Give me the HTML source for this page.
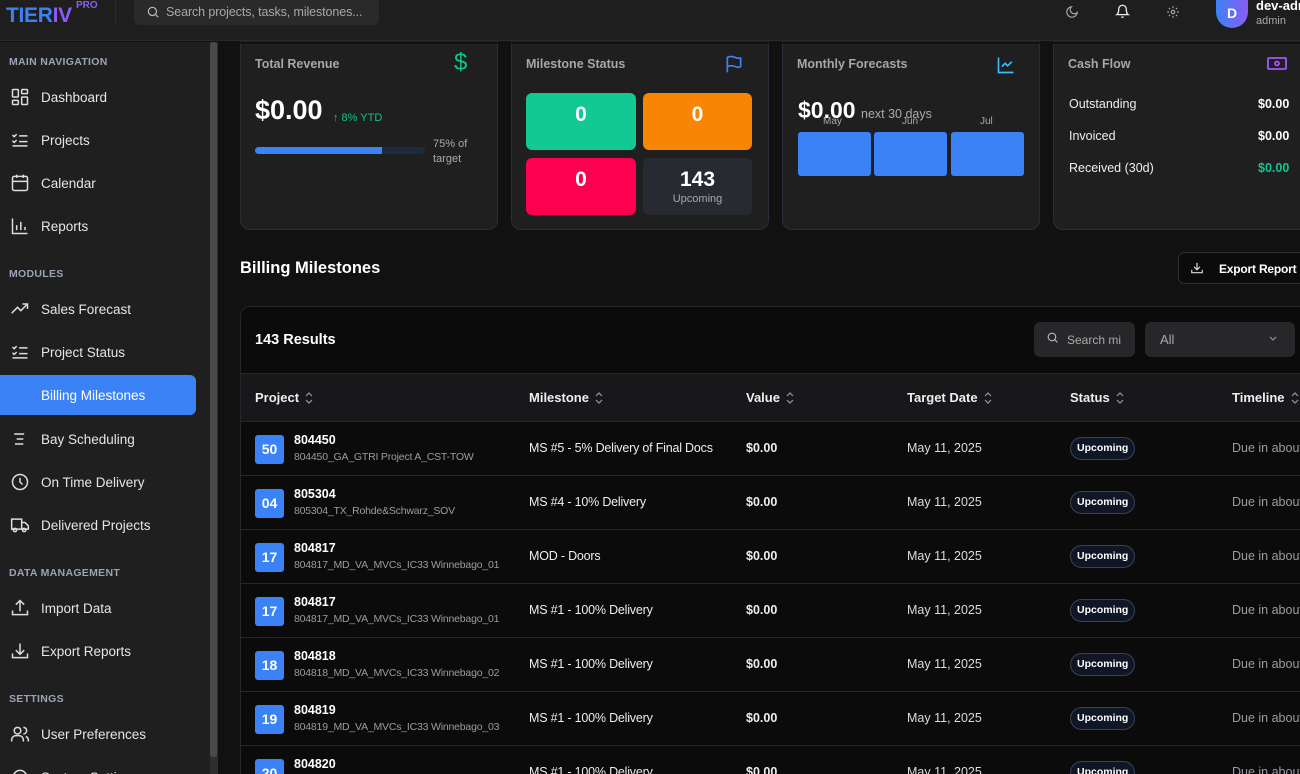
<!DOCTYPE html>
<html style="width:1300px;height:774px;overflow:hidden"><head><meta charset="utf-8"><style>
*{box-sizing:border-box;margin:0;padding:0}
body{width:1300px;height:774px;overflow:hidden;background:#111112;font-family:"Liberation Sans",sans-serif;color:#e5e7eb;position:relative;white-space:nowrap}
.abs{position:absolute}
svg{display:block}
.hdr{left:0;top:0;width:1300px;height:41px;background:#1e1e1e;border-bottom:1px solid #2a2a2a;z-index:5}
.side{left:0;top:42px;width:210px;height:732px;background:#1f1f1f;overflow:hidden}
.sec{position:absolute;left:9px;font-size:10.5px;color:#9aa4b5;letter-spacing:.3px;font-weight:bold}
.nav{position:absolute;left:0;width:196px;height:40px;display:flex;align-items:center;font-size:13.5px;color:#e6e6e6}
.nav svg{position:absolute;left:10px}
.nav span{position:absolute;left:41px}
.card{background:#1f1f1f;border:1px solid #2a2e36;border-radius:10px;top:20px;height:210px;width:258px}
.ct{position:absolute;left:14px;top:36px;font-size:12.5px;color:#a3a7ae;font-weight:bold}
.tb{left:240px;top:306px;width:1070px;height:468px;background:#0b0b0c;border:1px solid #26272b;border-bottom:none;border-radius:10px 10px 0 0;overflow:hidden}
.th{position:absolute;font-size:13px;font-weight:bold;color:#eee;top:83px;display:flex;align-items:center;gap:6px}
.row{position:absolute;left:0;width:1070px;height:54px;border-top:1px solid #26272b}
.row .b{position:absolute;left:14px;top:13px;width:29px;height:29px;background:#3b82f6;border-radius:3px;color:#fff;font-weight:bold;font-size:14px;text-align:center;line-height:29px}
.row .p{position:absolute;left:53px;top:11px;font-size:12.5px;font-weight:bold;color:#fff}
.row .s{position:absolute;left:53px;top:29px;font-size:10.5px;color:#9a9ca2;letter-spacing:-.2px}
.row .m{position:absolute;left:288px;top:19px;font-size:12.5px;color:#eee;letter-spacing:-.2px}
.row .v{position:absolute;left:505px;top:19px;font-size:12.5px;font-weight:bold;color:#eee}
.row .d{position:absolute;left:666px;top:19px;font-size:12.5px;color:#ddd}
.row .u{position:absolute;left:829px;top:15px;height:23px;padding:0 6px;border:1px solid #3a4252;background:#0f1626;border-radius:12px;font-size:10.5px;font-weight:bold;color:#fff;line-height:21px}
.row .t{position:absolute;left:991px;top:19px;font-size:12.5px;color:#9a9ca2}
</style></head><body>
<div class="abs hdr">
 <div class="abs" style="left:6px;top:4px;font-size:21px;font-weight:bold;letter-spacing:-.3px"><span style="color:#3b82f6">TIER</span><span style="color:#8b5cf6">IV</span></div>
 <div class="abs" style="left:76px;top:0px;font-size:10px;font-weight:bold;color:#8b5cf6">PRO</div>
 <div class="abs" style="left:115px;top:2px;width:1px;height:22px;background:#2c2c2c"></div>
 <div class="abs" style="left:134px;top:0;width:245px;height:25px;background:#2a2a2a;border-radius:0 0 6px 6px"></div>
 <svg class="abs" style="left:146px;top:5px" width="14" height="14" viewBox="0 0 24 24" fill="none" stroke="#bbb" stroke-width="2"><circle cx="11" cy="11" r="7"/><path d="M21 21l-5-5"/></svg>
 <div class="abs" style="left:166px;top:5px;font-size:12.5px;color:#a8a8a8;letter-spacing:-.1px">Search projects, tasks, milestones...</div>
 <svg class="abs" style="left:1065px;top:5px" width="14" height="14" viewBox="0 0 24 24" fill="none" stroke="#aaa" stroke-width="2"><path d="M21 13A9 9 0 1 1 11 3a7 7 0 0 0 10 10z"/></svg>
 <svg class="abs" style="left:1115px;top:4px" width="15" height="15" viewBox="0 0 24 24" fill="none" stroke="#eee" stroke-width="2"><path d="M6 8a6 6 0 0 1 12 0c0 7 3 9 3 9H3s3-2 3-9M10 21h4"/></svg>
 <svg class="abs" style="left:1166px;top:5px" width="14" height="14" viewBox="0 0 24 24" fill="none" stroke="#aaa" stroke-width="2"><circle cx="12" cy="12" r="3"/><path d="M12 2v3M12 19v3M2 12h3M19 12h3M5 5l2 2M17 17l2 2M5 19l2-2M17 7l2-2"/></svg>
 <div class="abs" style="left:1216px;top:0;width:32px;height:28px;border-radius:0 0 16px 16px;background:linear-gradient(90deg,#3b82f6,#8b5cf6);color:#fff;font-weight:bold;font-size:14px;text-align:center;line-height:26px">D</div>
 <div class="abs" style="left:1256px;top:-2px;font-size:13px;font-weight:bold;color:#fff">dev-admin</div>
 <div class="abs" style="left:1256px;top:15px;font-size:11px;color:#aaa">admin</div>
</div>
<div class="abs side">
 <div class="sec" style="top:14px">MAIN NAVIGATION</div>
 <div class="nav" style="top:35px"><svg width="20" height="20" viewBox="0 0 24 24" fill="none" stroke="#ddd" stroke-width="1.8"><rect x="3" y="3" width="7" height="9" rx="1"/><rect x="14" y="3" width="7" height="5" rx="1"/><rect x="14" y="12" width="7" height="9" rx="1"/><rect x="3" y="16" width="7" height="5" rx="1"/></svg><span>Dashboard</span></div>
 <div class="nav" style="top:78px"><svg width="20" height="20" viewBox="0 0 24 24" fill="none" stroke="#ddd" stroke-width="1.8"><path d="M3 6l2 2 3-3M3 13l2 2 3-3M11 7h10M11 14h10M3 19h18"/></svg><span>Projects</span></div>
 <div class="nav" style="top:121px"><svg width="20" height="20" viewBox="0 0 24 24" fill="none" stroke="#ddd" stroke-width="1.8"><rect x="3" y="4" width="18" height="17" rx="2"/><path d="M3 10h18M8 2v4M16 2v4"/></svg><span>Calendar</span></div>
 <div class="nav" style="top:164px"><svg width="20" height="20" viewBox="0 0 24 24" fill="none" stroke="#ddd" stroke-width="1.8"><path d="M3 3v18h18M8 17v-6M13 17V7M18 17v-4"/></svg><span>Reports</span></div>
 <div class="sec" style="top:226px">MODULES</div>
 <div class="nav" style="top:247px"><svg width="20" height="20" viewBox="0 0 24 24" fill="none" stroke="#ddd" stroke-width="1.8"><path d="M2 17l7-7 4 4 8-8M15 6h6v6"/></svg><span>Sales Forecast</span></div>
 <div class="nav" style="top:290px"><svg width="20" height="20" viewBox="0 0 24 24" fill="none" stroke="#ddd" stroke-width="1.8"><path d="M3 6l2 2 3-3M3 13l2 2 3-3M11 7h10M11 14h10M3 19h18"/></svg><span>Project Status</span></div>
 <div class="nav" style="top:333px;background:#3b82f6;border-radius:0 6px 6px 0"><span style="color:#fff">Billing Milestones</span></div>
 <div class="nav" style="top:377px"><svg width="20" height="20" viewBox="0 0 24 24" fill="none" stroke="#ddd" stroke-width="1.8"><path d="M5 6h12M8 12h8M6 18h10"/></svg><span>Bay Scheduling</span></div>
 <div class="nav" style="top:420px"><svg width="20" height="20" viewBox="0 0 24 24" fill="none" stroke="#ddd" stroke-width="1.8"><circle cx="12" cy="12" r="9"/><path d="M12 7v5l3 3"/></svg><span>On Time Delivery</span></div>
 <div class="nav" style="top:463px"><svg width="20" height="20" viewBox="0 0 24 24" fill="none" stroke="#ddd" stroke-width="1.8"><path d="M2 5h12v12H2zM14 9h4l4 4v4h-8"/><circle cx="6" cy="18" r="2"/><circle cx="17" cy="18" r="2"/></svg><span>Delivered Projects</span></div>
 <div class="sec" style="top:525px">DATA MANAGEMENT</div>
 <div class="nav" style="top:546px"><svg width="20" height="20" viewBox="0 0 24 24" fill="none" stroke="#ddd" stroke-width="1.8"><path d="M3 15v5h18v-5M12 3v13M7 8l5-5 5 5"/></svg><span>Import Data</span></div>
 <div class="nav" style="top:589px"><svg width="20" height="20" viewBox="0 0 24 24" fill="none" stroke="#ddd" stroke-width="1.8"><path d="M3 15v5h18v-5M12 3v13M7 11l5 5 5-5"/></svg><span>Export Reports</span></div>
 <div class="sec" style="top:651px">SETTINGS</div>
 <div class="nav" style="top:672px"><svg width="20" height="20" viewBox="0 0 24 24" fill="none" stroke="#ddd" stroke-width="1.8"><circle cx="9" cy="8" r="4"/><path d="M2 21v-2a5 5 0 0 1 5-5h4a5 5 0 0 1 5 5v2M16 4a4 4 0 0 1 0 8M22 21v-2a5 5 0 0 0-3-4"/></svg><span>User Preferences</span></div>
 <div class="nav" style="top:715px"><svg width="20" height="20" viewBox="0 0 24 24" fill="none" stroke="#ddd" stroke-width="1.8"><circle cx="12" cy="12" r="3"/><circle cx="12" cy="12" r="8"/></svg><span>System Settings</span></div>
</div>
<div class="abs" style="left:210px;top:42px;width:8px;height:732px;background:#2e2e2e"></div>
<div class="abs" style="left:210px;top:42px;width:7px;height:715px;background:#4a4a4a;border-radius:3px"></div>

<div class="abs card" style="left:240px">
 <div class="ct">Total Revenue</div>
 <div class="abs" style="left:213px;top:28px;font-size:24px;color:#10c48f">$</div>
 <div class="abs" style="left:14px;top:74px;font-size:27px;font-weight:bold;color:#fff">$0.00</div>
 <div class="abs" style="left:92px;top:91px;font-size:11px;color:#10c48f">↑ 8% YTD</div>
 <div class="abs" style="left:14px;top:126px;width:170px;height:7px;background:#1e2a3d;border-radius:4px"><div style="width:127px;height:7px;background:#3b82f6;border-radius:4px 0 0 4px"></div></div>
 <div class="abs" style="left:192px;top:116px;font-size:11px;color:#aaa;line-height:15px">75% of<br>target</div>
</div>
<div class="abs card" style="left:511px">
 <div class="ct">Milestone Status</div>
 <svg class="abs" style="left:212px;top:33px" width="20" height="20" viewBox="0 0 24 24" fill="none" stroke="#3b82f6" stroke-width="2"><path d="M4 22V4s2-1 5-1 5 2 8 2 3-1 3-1v11s-1 1-3 1-5-2-8-2-5 1-5 1"/></svg>
 <div class="abs" style="left:14px;top:72px;width:110px;height:57px;background:#12c994;border-radius:6px;color:#fff;font-size:21px;font-weight:bold;text-align:center;line-height:44px">0</div>
 <div class="abs" style="left:131px;top:72px;width:109px;height:57px;background:#f88504;border-radius:6px;color:#fff;font-size:21px;font-weight:bold;text-align:center;line-height:44px">0</div>
 <div class="abs" style="left:14px;top:137px;width:110px;height:57px;background:#fe0050;border-radius:6px;color:#fff;font-size:21px;font-weight:bold;text-align:center;line-height:44px">0</div>
 <div class="abs" style="left:131px;top:137px;width:109px;height:57px;background:#272a30;border-radius:6px;color:#fff;text-align:center"><div style="font-size:21px;font-weight:bold;margin-top:10px">143</div><div style="font-size:11px;color:#aaa;margin-top:1px">Upcoming</div></div>
</div>
<div class="abs card" style="left:782px">
 <div class="ct">Monthly Forecasts</div>
 <svg class="abs" style="left:213px;top:34px" width="20" height="20" viewBox="0 0 24 24" fill="none" stroke="#38bdf8" stroke-width="2"><path d="M3 3v18h18M7 14l4-4 3 3 5-5"/></svg>
 <div class="abs" style="left:15px;top:76px;font-size:23px;font-weight:bold;color:#fff">$0.00</div>
 <div class="abs" style="left:78px;top:86px;font-size:12.5px;color:#aaa">next 30 days</div>
 <div class="abs" style="left:40px;top:95px;font-size:10px;color:#aaa">May</div>
 <div class="abs" style="left:119px;top:95px;font-size:10px;color:#aaa">Jun</div>
 <div class="abs" style="left:197px;top:95px;font-size:10px;color:#aaa">Jul</div>
 <div class="abs" style="left:15px;top:111px;width:73px;height:44px;background:#3b82f6;border-radius:3px"></div>
 <div class="abs" style="left:91px;top:111px;width:73px;height:44px;background:#3b82f6;border-radius:3px"></div>
 <div class="abs" style="left:168px;top:111px;width:73px;height:44px;background:#3b82f6;border-radius:3px"></div>
</div>
<div class="abs card" style="left:1053px;width:270px">
 <div class="ct">Cash Flow</div>
 <svg class="abs" style="left:213px;top:35px" width="20" height="16" viewBox="0 0 20 16" fill="none" stroke="#a855f7" stroke-width="1.8"><rect x="1" y="2" width="18" height="11" rx="1"/><circle cx="10" cy="7.5" r="2"/></svg>
 <div class="abs" style="left:15px;top:76px;font-size:12.5px;color:#eee">Outstanding</div>
 <div class="abs" style="left:204px;top:76px;font-size:12.5px;font-weight:bold;color:#fff">$0.00</div>
 <div class="abs" style="left:15px;top:108px;font-size:12.5px;color:#eee">Invoiced</div>
 <div class="abs" style="left:204px;top:108px;font-size:12.5px;font-weight:bold;color:#fff">$0.00</div>
 <div class="abs" style="left:15px;top:140px;font-size:12.5px;color:#eee">Received (30d)</div>
 <div class="abs" style="left:204px;top:140px;font-size:12.5px;font-weight:bold;color:#10c48f">$0.00</div>
</div>
<div class="abs" style="left:218px;top:42px;width:1082px;height:2px;background:#111112"></div>

<div class="abs" style="left:240px;top:259px;font-size:16.5px;font-weight:bold;color:#fff">Billing Milestones</div>
<div class="abs" style="left:1178px;top:252px;width:140px;height:32px;background:#0b0b0c;border:1px solid #2c2e33;border-radius:6px"></div>
<svg class="abs" style="left:1190px;top:261px" width="14" height="14" viewBox="0 0 24 24" fill="none" stroke="#ddd" stroke-width="2"><path d="M3 15v5h18v-5M12 3v12M7 10l5 5 5-5"/></svg>
<div class="abs" style="left:1219px;top:262px;font-size:12px;font-weight:bold;color:#fff;letter-spacing:-.2px">Export Report</div>

<div class="abs tb">
 <div class="abs" style="left:14px;top:25px;font-size:14.5px;font-weight:bold;color:#fff">143 Results</div>
 <div class="abs" style="left:793px;top:15px;width:101px;height:35px;background:#27272a;border-radius:6px"></div>
 <svg class="abs" style="left:805px;top:24px" width="13" height="13" viewBox="0 0 24 24" fill="none" stroke="#bbb" stroke-width="2"><circle cx="11" cy="11" r="7"/><path d="M21 21l-5-5"/></svg>
 <div class="abs" style="left:826px;top:26px;font-size:12px;color:#aaa">Search mi</div>
 <div class="abs" style="left:904px;top:15px;width:150px;height:35px;background:#27272a;border-radius:6px"></div>
 <div class="abs" style="left:919px;top:25px;font-size:13px;color:#aaa">All</div>
 <svg class="abs" style="left:1027px;top:28px" width="10" height="8" viewBox="0 0 10 8" fill="none" stroke="#888" stroke-width="1.3"><path d="M2 2l3 3 3-3"/></svg>
 <div class="abs" style="left:0;top:66px;width:1070px;height:49px;background:#18181b;border-top:1px solid #26272b"></div>
 <div class="th" style="left:14px">Project <svg width="8" height="12" viewBox="0 0 8 12" fill="none" stroke="#999" stroke-width="1.2"><path d="M1 4l3-3 3 3M1 8l3 3 3-3"/></svg></div>
 <div class="th" style="left:288px">Milestone <svg width="8" height="12" viewBox="0 0 8 12" fill="none" stroke="#999" stroke-width="1.2"><path d="M1 4l3-3 3 3M1 8l3 3 3-3"/></svg></div>
 <div class="th" style="left:505px">Value <svg width="8" height="12" viewBox="0 0 8 12" fill="none" stroke="#999" stroke-width="1.2"><path d="M1 4l3-3 3 3M1 8l3 3 3-3"/></svg></div>
 <div class="th" style="left:666px">Target Date <svg width="8" height="12" viewBox="0 0 8 12" fill="none" stroke="#999" stroke-width="1.2"><path d="M1 4l3-3 3 3M1 8l3 3 3-3"/></svg></div>
 <div class="th" style="left:829px">Status <svg width="8" height="12" viewBox="0 0 8 12" fill="none" stroke="#999" stroke-width="1.2"><path d="M1 4l3-3 3 3M1 8l3 3 3-3"/></svg></div>
 <div class="th" style="left:991px">Timeline <svg width="8" height="12" viewBox="0 0 8 12" fill="none" stroke="#999" stroke-width="1.2"><path d="M1 4l3-3 3 3M1 8l3 3 3-3"/></svg></div>
 <div class="row" style="top:114px"><div class="b">50</div><div class="p">804450</div><div class="s">804450_GA_GTRI Project A_CST-TOW</div><div class="m">MS #5 - 5% Delivery of Final Docs</div><div class="v">$0.00</div><div class="d">May 11, 2025</div><div class="u">Upcoming</div><div class="t">Due in about</div></div>
 <div class="row" style="top:168px"><div class="b">04</div><div class="p">805304</div><div class="s">805304_TX_Rohde&amp;Schwarz_SOV</div><div class="m">MS #4 - 10% Delivery</div><div class="v">$0.00</div><div class="d">May 11, 2025</div><div class="u">Upcoming</div><div class="t">Due in about</div></div>
 <div class="row" style="top:222px"><div class="b">17</div><div class="p">804817</div><div class="s">804817_MD_VA_MVCs_IC33 Winnebago_01</div><div class="m">MOD - Doors</div><div class="v">$0.00</div><div class="d">May 11, 2025</div><div class="u">Upcoming</div><div class="t">Due in about</div></div>
 <div class="row" style="top:276px"><div class="b">17</div><div class="p">804817</div><div class="s">804817_MD_VA_MVCs_IC33 Winnebago_01</div><div class="m">MS #1 - 100% Delivery</div><div class="v">$0.00</div><div class="d">May 11, 2025</div><div class="u">Upcoming</div><div class="t">Due in about</div></div>
 <div class="row" style="top:330px"><div class="b">18</div><div class="p">804818</div><div class="s">804818_MD_VA_MVCs_IC33 Winnebago_02</div><div class="m">MS #1 - 100% Delivery</div><div class="v">$0.00</div><div class="d">May 11, 2025</div><div class="u">Upcoming</div><div class="t">Due in about</div></div>
 <div class="row" style="top:384px"><div class="b">19</div><div class="p">804819</div><div class="s">804819_MD_VA_MVCs_IC33 Winnebago_03</div><div class="m">MS #1 - 100% Delivery</div><div class="v">$0.00</div><div class="d">May 11, 2025</div><div class="u">Upcoming</div><div class="t">Due in about</div></div>
 <div class="row" style="top:438px"><div class="b">20</div><div class="p">804820</div><div class="s">804820_MD_VA_MVCs_IC33 Winnebago_04</div><div class="m">MS #1 - 100% Delivery</div><div class="v">$0.00</div><div class="d">May 11, 2025</div><div class="u">Upcoming</div><div class="t">Due in about</div></div>
</div>
</body></html>
